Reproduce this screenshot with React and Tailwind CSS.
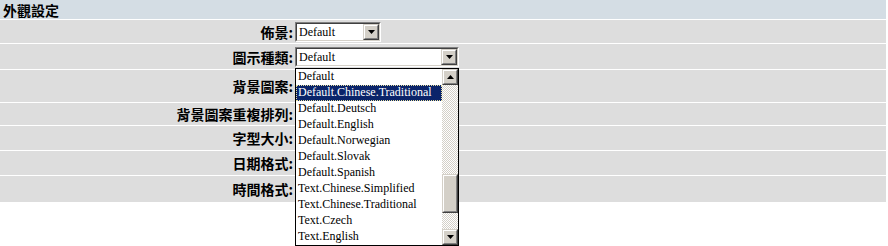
import React from "react";

const items = [
  "Default",
  "Default.Chinese.Traditional",
  "Default.Deutsch",
  "Default.English",
  "Default.Norwegian",
  "Default.Slovak",
  "Default.Spanish",
  "Text.Chinese.Simplified",
  "Text.Chinese.Traditional",
  "Text.Czech",
  "Text.English",
];

function Arrow({ down = true }) {
  return (
    <svg width="7" height="4" viewBox="0 0 7 4" className="block">
      {down ? (
        <polygon points="0,0 7,0 3.5,4" fill="#000" />
      ) : (
        <polygon points="0,4 7,4 3.5,0" fill="#000" />
      )}
    </svg>
  );
}

function Btn({ down = true }) {
  return (
    <div className="w-[16px] h-[16px] border border-t-[#d4d0c8] border-l-[#d4d0c8] border-r-[#404040] border-b-[#404040] box-border">
      <div className="w-full h-full border border-t-white border-l-white border-r-[#808080] border-b-[#808080] bg-[#d4d0c8] flex items-center justify-center box-border">
        <Arrow down={down} />
      </div>
    </div>
  );
}

function Select({ wide, children }) {
  return (
    <div
      className={`${wide ? "w-[164px]" : "w-[86px]"} h-[20px] border border-t-[#808080] border-l-[#808080] border-r-white border-b-white box-border`}
    >
      <div className="w-full h-full border border-t-[#404040] border-l-[#404040] border-r-[#d4d0c8] border-b-[#d4d0c8] bg-white flex items-center box-border">
        <span className="flex-1 pl-[2px] text-[12px] leading-[16px] font-['Liberation_Serif',serif] text-black">
          Default
        </span>
        <Btn />
      </div>
      {children}
    </div>
  );
}

function Dropdown() {
  return (
    <div className="absolute left-0 top-[21px] w-[164px] h-[178px] border border-black bg-white flex box-border">
      <div className="flex-1 flex flex-col">
        {items.map((t, i) => (
          <div
            key={t}
            className={`h-[16px] leading-[15px] pl-[2px] text-[12px] font-['Liberation_Serif',serif] whitespace-nowrap ${
              i === 1
                ? "bg-[#0a246a] text-white outline outline-1 outline-dotted outline-[#e8e0a0] -outline-offset-1"
                : "text-black"
            }`}
          >
            {t}
          </div>
        ))}
      </div>
      <div className="w-[16px] flex flex-col bg-[repeating-conic-gradient(#d4d0c8_0_25%,#ffffff_0_50%)] bg-[length:2px_2px]">
        <Btn down={false} />
        <div className="h-[89px]" />
        <div className="w-[16px] h-[39px] border border-t-[#d4d0c8] border-l-[#d4d0c8] border-r-[#404040] border-b-[#404040] box-border">
          <div className="w-full h-full border border-t-white border-l-white border-r-[#808080] border-b-[#808080] bg-[#d4d0c8] box-border" />
        </div>
        <div className="flex-1" />
        <Btn />
      </div>
    </div>
  );
}

function Row({ h, label, children }) {
  return (
    <div className={`flex items-center bg-[#dddddd] ${h}`}>
      <div className="w-[293px] text-right text-[14px] font-bold text-black font-['Noto_Sans_CJK_TC',sans-serif] leading-none">
        {label}
      </div>
      <div className="ml-[2px] relative">{children}</div>
    </div>
  );
}

export default function App() {
  return (
    <div className="w-[888px] h-[246px] bg-white overflow-hidden">
      <div className="w-[886px] flex flex-col gap-px bg-white">
        <div className="h-[19px] bg-[#d4dde4] pl-[3px] flex items-center text-[14px] font-bold text-black font-['Noto_Sans_CJK_TC',sans-serif] leading-none">
          外觀設定
        </div>
        <Row h="h-[23px]" label="佈景:">
          <Select />
        </Row>
        <Row h="h-[25px]" label="圖示種類:">
          <div className="relative z-10">
            <Select wide>
              <Dropdown />
            </Select>
          </div>
        </Row>
        <Row h="h-[32px]" label="背景圖案:" />
        <Row h="h-[22px]" label="背景圖案重複排列:" />
        <Row h="h-[24px]" label="字型大小:" />
        <Row h="h-[24px]" label="日期格式:" />
        <Row h="h-[26px]" label="時間格式:" />
      </div>
    </div>
  );
}
